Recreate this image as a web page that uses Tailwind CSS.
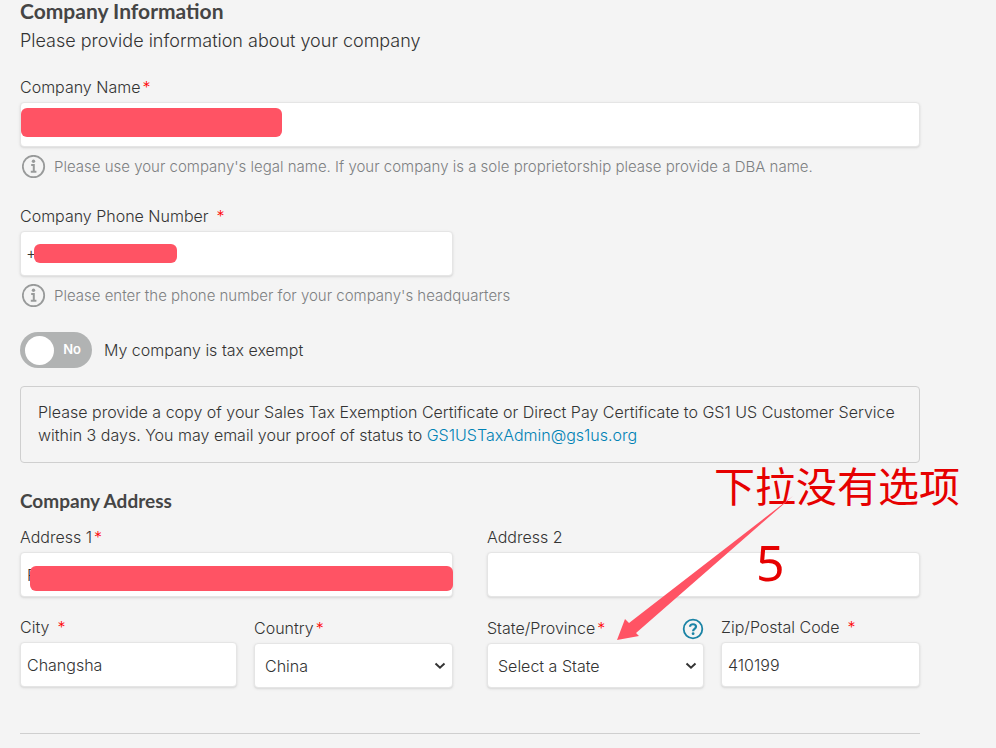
<!DOCTYPE html>
<html lang="en">
<head>
    <meta charset="UTF-8">
    <meta name="viewport" content="width=device-width, initial-scale=1.0">
    <title>Company Information</title>
    <script src="https://cdn.jsdelivr.net/npm/@tailwindcss/browser@4"></script>
</head>

<body class="bg-[#f4f4f4] font-['Inter',sans-serif] text-base font-light text-[#333] overflow-x-hidden">
    <main class="relative pl-5 pr-[76px]">
        <form id="companyForm">
            <h1 class="font-['Lato',sans-serif] text-[21px] leading-[22px] font-bold text-[#454545]">Company Information</h1>
            <p class="mt-[7px] text-lg leading-6">Please provide information about your company</p>

            <div class="mt-[22px]">
                <label for="companyName" class="block leading-6">Company Name<span class="ml-[2px] text-[#f00]">*</span></label>
                <div class="relative mt-[3px]">
                    <input type="text" id="companyName" name="companyName"
                        class="block w-full h-[45px] rounded bg-white border border-[#e5e5e5] px-[6px] shadow-sm focus:outline-none">
                    <span class="absolute left-[1px] top-[6px] h-[29px] w-[261px] rounded-md bg-[#ff5364]"></span>
                </div>
                <div class="mt-2 flex items-center text-[15px] leading-6 text-[#7d8082]">
                    <svg class="ml-[2px] mr-2 size-6 shrink-0" viewBox="0 0 24 24" fill="none" stroke="#989a9a">
                        <circle cx="11.500" cy="11.500" r="10.700" stroke-width="1.800"/>
                        <circle cx="11.500" cy="6.300" r="1.700" fill="#989a9a" stroke="none"/>
                        <path d="M9.200 9.900h2.600v7M8.800 16.700h5.600" stroke-width="2"/>
                    </svg>
                    <span>Please use your company's legal name. If your company is a sole proprietorship please provide a DBA name.</span>
                </div>
            </div>

            <div class="mt-[25px]">
                <label for="phone" class="block leading-6">Company Phone Number<span class="ml-2 text-[#f00]">*</span></label>
                <div class="relative mt-[3px] w-[calc(50%-17px)]">
                    <input type="tel" id="phone" name="phone" value="+"
                        class="block w-full h-[45px] rounded bg-white border border-[#e5e5e5] px-[6px] font-['Liberation_Sans',sans-serif] text-sm font-normal shadow-sm focus:outline-none">
                    <span class="absolute left-[14px] top-[13px] h-[19px] w-[143px] rounded-md bg-[#ff5364]"></span>
                </div>
                <div class="mt-2 flex items-center text-[15px] leading-6 text-[#7d8082]">
                    <svg class="ml-[2px] mr-2 size-6 shrink-0" viewBox="0 0 24 24" fill="none" stroke="#989a9a">
                        <circle cx="11.500" cy="11.500" r="10.700" stroke-width="1.800"/>
                        <circle cx="11.500" cy="6.300" r="1.700" fill="#989a9a" stroke="none"/>
                        <path d="M9.200 9.900h2.600v7M8.800 16.700h5.600" stroke-width="2"/>
                    </svg>
                    <span>Please enter the phone number for your company's headquarters</span>
                </div>
            </div>

            <label class="mt-6 flex w-fit items-center cursor-pointer">
                <input type="checkbox" id="taxExempt" name="taxExempt" class="peer sr-only">
                <span class="flex h-9 w-[72px] items-center justify-between rounded-full bg-[#b1b3b3] pl-[5px] pr-[11px] peer-checked:bg-[#008dbd]">
                    <span class="size-[29px] rounded-full bg-white"></span>
                    <span id="taxExemptText" class="text-[13px] font-semibold text-white">No</span>
                </span>
                <span class="ml-3 leading-6">My company is tax exempt</span>
            </label>

            <div class="mt-[18px] rounded border border-[#cfcfcf] pt-[14px] pb-[15px] px-[17px] leading-[23px]">
                Please provide a copy of your Sales Tax Exemption Certificate or Direct Pay Certificate to GS1 US Customer Service within 3 days. You may email your proof of status to <a href="mailto:GS1USTaxAdmin@gs1us.org" class="text-[#0082b5]">GS1USTaxAdmin@gs1us.org</a>
            </div>

            <h2 class="mt-[26px] font-['Lato',sans-serif] text-[19px] leading-6 font-bold text-[#454545]">Company Address</h2>

            <div class="mt-3 grid grid-cols-2 gap-x-[34px]">
                <div>
                    <label for="address1" class="block leading-6">Address 1<span class="ml-[2px] text-[#f00]">*</span></label>
                    <div class="relative mt-[3px]">
                        <input type="text" id="address1" name="address1" value="F"
                            class="block w-full h-[45px] rounded bg-white border border-[#e5e5e5] px-[6px] shadow-sm focus:outline-none">
                        <span class="absolute left-[10px] right-0 top-[14px] h-[25px] rounded-md bg-[#ff5364]"></span>
                    </div>
                </div>
                <div>
                    <label for="address2" class="block leading-6">Address 2</label>
                    <input type="text" id="address2" name="address2"
                        class="mt-[3px] block w-full h-[45px] rounded bg-white border border-[#e5e5e5] px-[6px] shadow-sm focus:outline-none">
                </div>
            </div>

            <div class="mt-[18px] grid grid-cols-2 gap-x-[34px]">
                <div class="grid grid-cols-[217fr_199fr] gap-x-[17px]">
                    <div>
                        <label for="city" class="block leading-6">City<span class="ml-2 text-[#f00]">*</span></label>
                        <input type="text" id="city" name="city" value="Changsha"
                            class="mt-[3px] block w-full h-[45px] rounded bg-white border border-[#e5e5e5] px-[6px] shadow-sm focus:outline-none">
                    </div>
                    <div class="pt-px">
                        <label for="country" class="block leading-6">Country<span class="ml-[2px] text-[#f00]">*</span></label>
                        <div class="relative mt-[3px]">
                            <select id="country" name="country"
                                class="block w-full h-[45px] appearance-none rounded bg-white border border-[#e5e5e5] px-[10px] shadow-sm focus:outline-none">
                                <option>China</option>
                            </select>
                            <svg class="pointer-events-none absolute right-[7px] top-[19px] h-2 w-3" viewBox="0 0 12 8" fill="none" stroke="#333" stroke-width="2">
                                <path d="M1.500 1.500 6 5.700l4.500-4.200"/>
                            </svg>
                        </div>
                    </div>
                </div>
                <div class="grid grid-cols-[217fr_199fr] gap-x-[17px]">
                    <div class="pt-px">
                        <div class="flex h-6 items-end justify-between">
                            <label for="state" class="block leading-6">State/Province<span class="ml-[2px] text-[#f00]">*</span></label>
                            <button type="button" aria-label="Help">
                                <svg class="size-[22px]" viewBox="0 0 22 22" fill="none" stroke="#1a83a5">
                                    <circle cx="11" cy="11" r="9.300" stroke-width="1.800"/>
                                    <path d="M8 8.800C8 5.400 14 5.400 14 8.800c0 2.100-2.900 2.100-2.900 4.400" stroke-width="2.200"/>
                                    <circle cx="11.100" cy="15.700" r="1.400" fill="#1a83a5" stroke="none"/>
                                </svg>
                            </button>
                        </div>
                        <div class="relative mt-[3px]">
                            <select id="state" name="state"
                                class="block w-full h-[45px] appearance-none rounded bg-white border border-[#e5e5e5] px-[10px] shadow-sm focus:outline-none">
                                <option>Select a State</option>
                            </select>
                            <svg class="pointer-events-none absolute right-[7px] top-[19px] h-2 w-3" viewBox="0 0 12 8" fill="none" stroke="#333" stroke-width="2">
                                <path d="M1.500 1.500 6 5.700l4.500-4.200"/>
                            </svg>
                        </div>
                    </div>
                    <div>
                        <label for="zip" class="block leading-6">Zip/Postal Code<span class="ml-2 text-[#f00]">*</span></label>
                        <input type="text" id="zip" name="zip" value="410199"
                            class="mt-[3px] block w-full h-[45px] rounded bg-white border border-[#e5e5e5] px-[6px] shadow-sm focus:outline-none">
                    </div>
                </div>
            </div>

            <hr class="mt-[45px] mb-3 border-[#cfcfcf]">
        </form>

        <!-- Notes on top of the form -->
        <p class="pointer-events-none absolute left-[714px] top-[460px] whitespace-nowrap font-['Noto_Sans_CJK_SC',sans-serif] text-[41px] leading-[48px] font-normal text-[#e60000]" lang="zh-CN">下拉没有选项</p>
        <p class="pointer-events-none absolute left-[756px] top-[534px] font-['Noto_Sans',sans-serif] text-[50px] leading-[56px] font-normal text-[#e60000]">5</p>
        <svg class="pointer-events-none absolute left-[616px] top-[496px] h-[145px] w-[178px]" viewBox="0 0 178 145" fill="#ff5364">
            <path d="M177 0 13 127 9 123 1 144 23 140 20 137Z"/>
        </svg>
    </main>
</body>

<script>
    const taxExempt = document.getElementById('taxExempt');
    const taxExemptText = document.getElementById('taxExemptText');

    taxExempt.addEventListener('change', () => {
        taxExemptText.textContent = taxExempt.checked ? 'Yes' : 'No';
    });
</script>
</html>
